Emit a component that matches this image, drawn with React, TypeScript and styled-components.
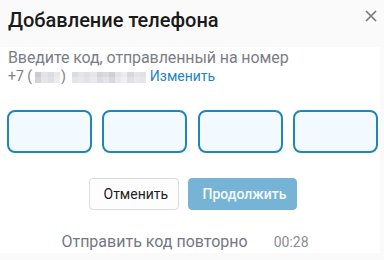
import React from "react";
import styled, { createGlobalStyle } from "styled-components";

const GlobalStyle = createGlobalStyle`
  html, body {
    margin: 0;
    padding: 0;
    background: #fafafa;
  }
  body {
    font-family: Roboto, "Noto Sans", "Liberation Sans", sans-serif;
    -webkit-font-smoothing: antialiased;
  }
`;

const Dialog = styled.div`
  width: 384px;
  height: 260px;
  box-sizing: border-box;
  display: flex;
  flex-direction: column;
`;

const Header = styled.div`
  height: 47px;
  box-sizing: border-box;
  padding: 8px 6px 0 8px;
  display: flex;
  justify-content: space-between;
  align-items: flex-start;
`;

const Title = styled.h1`
  margin: 0;
  font-size: 20px;
  line-height: 24px;
  font-weight: 500;
  color: #1a1a1a;
`;

const CloseButton = styled.button`
  border: none;
  background: none;
  padding: 0;
  margin-top: 1px;
  width: 14px;
  height: 14px;
  display: flex;
  align-items: center;
  justify-content: center;
  cursor: pointer;
`;

const Body = styled.div`
  flex: 1;
  width: 380px;
  background: #fff;
  padding: 1px 0 0 7px;
  box-sizing: border-box;
  max-height: 206px;
`;

const Hint = styled.div`
  margin-left: 1px;
  color: #7b7e85;
`;

const HintLine = styled.div<{ small?: boolean }>`
  font-size: ${({ small }) => (small ? "14px" : "16px")};
  letter-spacing: ${({ small }) => (small ? "0" : "-0.1px")};
  line-height: 19px;
  display: flex;
  align-items: center;
  white-space: pre;
`;

const Masked = styled.span<{ cols: number; cellW: number; ml: number }>`
  display: inline-grid;
  grid-template-columns: repeat(${({ cols, cellW }) => `${cols}, ${cellW}px`});
  grid-auto-rows: 5.5px;
  margin: 1px 1px 0 ${({ ml }) => ml}px;
`;

const Cell = styled.span<{ shade: string }>`
  display: block;
  background: ${({ shade }) => shade};
`;

const ChangeLink = styled.a`
  margin-left: 3px;
  color: #2486c2;
  text-decoration: none;
  cursor: pointer;
`;

const CodeRow = styled.div`
  margin-top: 24px;
  width: 371px;
  display: flex;
  justify-content: space-between;
`;

const CodeInput = styled.input`
  box-sizing: border-box;
  height: 43px;
  width: 85px;
  border: 2px solid #1f86ba;
  border-radius: 8px;
  background: #f3faff;
  outline: none;
  font-family: inherit;
  font-size: 20px;
  text-align: center;
`;

const Actions = styled.div`
  margin-top: 25px;
  display: flex;
  justify-content: center;
  gap: 9px;
  padding-right: 2px;
`;

const Button = styled.button<{ primary?: boolean }>`
  height: 32px;
  box-sizing: border-box;
  padding: 0 14px;
  border-radius: 4px;
  font-family: inherit;
  font-size: 14px;
  font-weight: ${({ primary }) => (primary ? 500 : 400)};
  border: 1px solid ${({ primary }) => (primary ? "#76b3d5" : "#dcdcdc")};
  background: ${({ primary }) => (primary ? "#76b3d5" : "#fdfdfd")};
  color: ${({ primary }) => (primary ? "#f4faff" : "#1e1e1e")};
  width: ${({ primary }) => (primary ? "109px" : "90px")};
`;

const Resend = styled.div`
  margin-top: 22px;
  display: flex;
  justify-content: center;
  align-items: baseline;
  gap: 26px;
  padding-right: 17px;
`;

const ResendLink = styled.span`
  font-size: 16px;
  line-height: 20px;
  color: #747883;
`;

const Timer = styled.span`
  font-size: 14px;
  color: #8a8d93;
`;

const mask1 = [
  "#cbcbd3", "#e3e3e8", "#dcdce2", "#e8e8ec",
  "#d3d3da", "#e6e6ea", "#e0e0e5", "#ececf0",
];
const mask2 = [
  "#dcdce2", "#e4e4e9", "#dedee4", "#e6e6ea", "#d4d4db", "#dadae0", "#cfcfd7", "#e2e2e7", "#ececf0", "#d8d8de", "#e4e4e9", "#e0e0e5",
  "#e4e4e9", "#e8e8ec", "#e2e2e7", "#eaeaee", "#dcdce2", "#e3e3e8", "#d8d8df", "#e8e8ec", "#f0f0f3", "#e0e0e5", "#e9e9ed", "#e6e6ea",
];

const Mask = ({ shades, cols, cellW, ml }: { shades: string[]; cols: number; cellW: number; ml: number }) => (
  <Masked cols={cols} cellW={cellW} ml={ml}>
    {shades.map((s, i) => (
      <Cell key={i} shade={s} />
    ))}
  </Masked>
);

export default function App() {
  return (
    <>
      <GlobalStyle />
      <Dialog>
        <Header>
          <Title>Добавление телефона</Title>
          <CloseButton aria-label="Закрыть">
            <svg width="12" height="12" viewBox="0 0 12 12">
              <path d="M1 1 L11 11 M11 1 L1 11" stroke="#7a7a7a" strokeWidth="1.7" fill="none" />
            </svg>
          </CloseButton>
        </Header>
        <Body>
          <Hint>
            <HintLine>Введите код, отправленный на номер</HintLine>
            <HintLine small>
              {"+7 ("}
              <Mask shades={mask1} cols={4} cellW={6.25} ml={3} />
              {") "}
              <Mask shades={mask2} cols={12} cellW={6.17} ml={2.5} />
              <ChangeLink>Изменить</ChangeLink>
            </HintLine>
          </Hint>
          <CodeRow>
            <CodeInput inputMode="numeric" maxLength={1} />
            <CodeInput inputMode="numeric" maxLength={1} />
            <CodeInput inputMode="numeric" maxLength={1} />
            <CodeInput inputMode="numeric" maxLength={1} />
          </CodeRow>
          <Actions>
            <Button>Отменить</Button>
            <Button primary>Продолжить</Button>
          </Actions>
          <Resend>
            <ResendLink>Отправить код повторно</ResendLink>
            <Timer>00:28</Timer>
          </Resend>
        </Body>
      </Dialog>
    </>
  );
}
